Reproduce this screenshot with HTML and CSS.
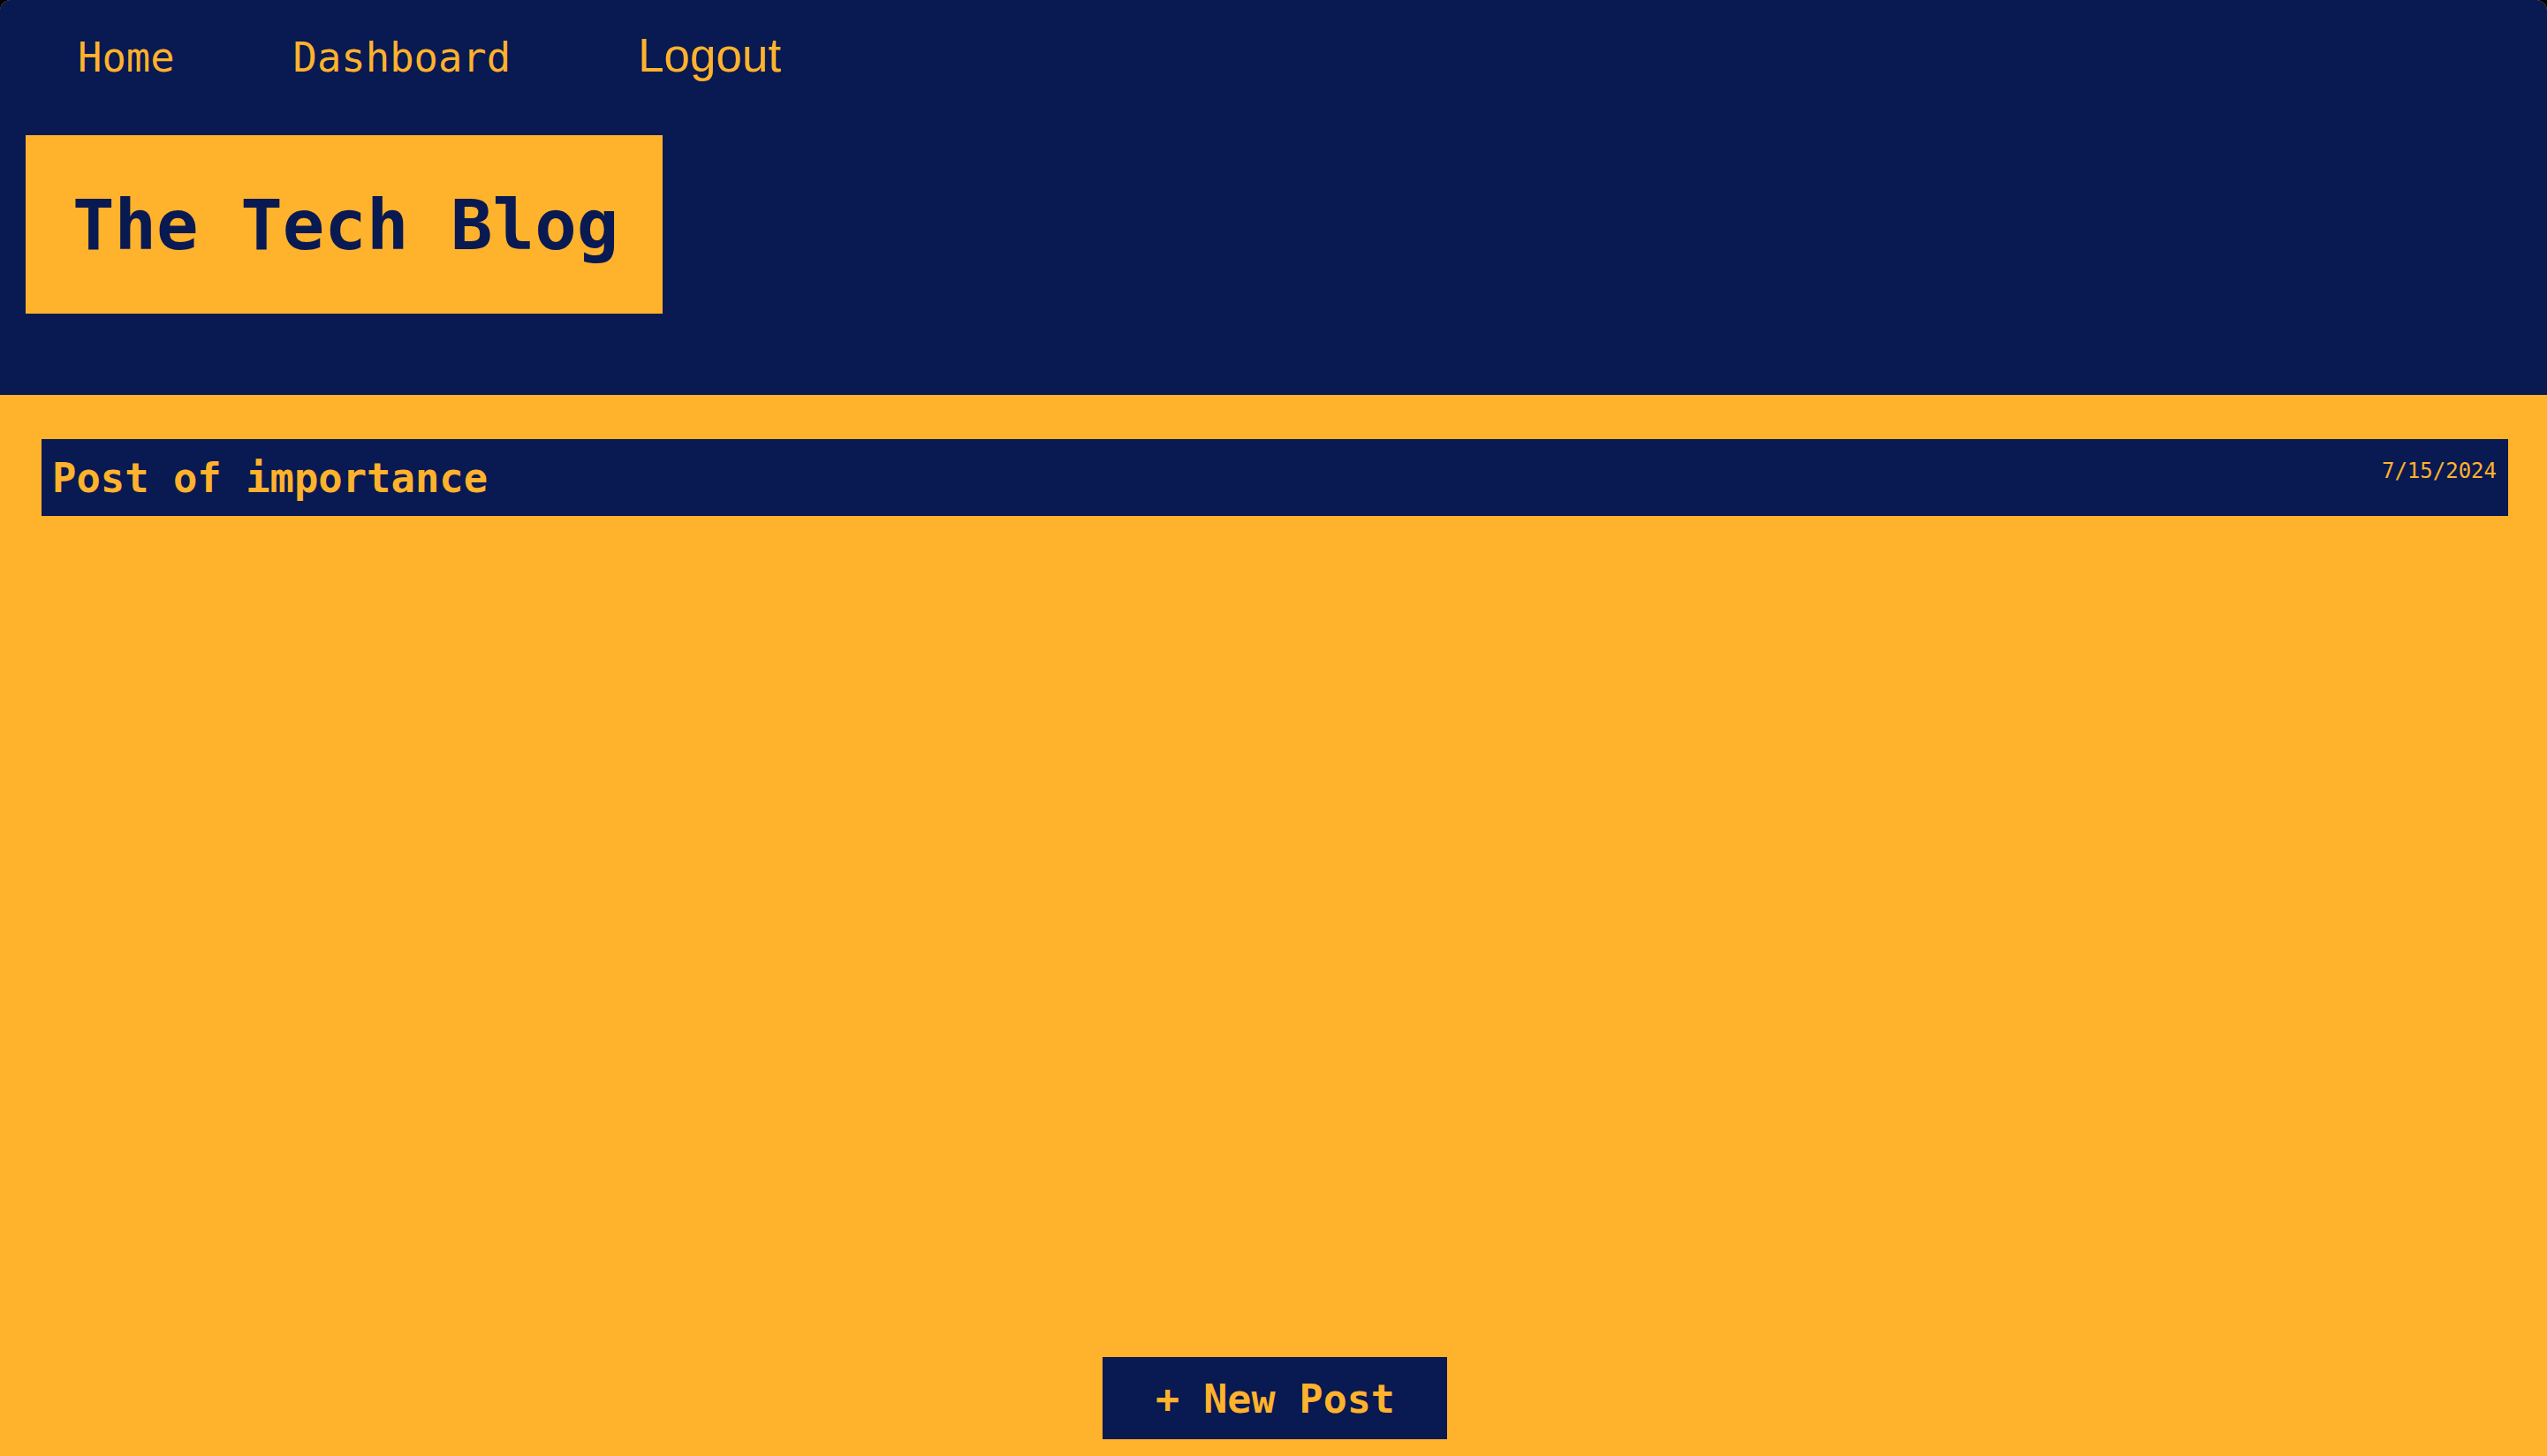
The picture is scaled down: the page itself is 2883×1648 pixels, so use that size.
FILE: index.html
```html
<!DOCTYPE html>
<html lang="en">
<head>
<meta charset="utf-8">
<title>The Tech Blog</title>
<link rel="stylesheet" href="styles.css">
</head>
<body>
<div class="page">
  <header class="site-header">
    <nav class="nav">
      <a class="nav-link" href="#">Home</a>
      <a class="nav-link" href="#">Dashboard</a>
      <a class="nav-link logout" href="#">Logout</a>
    </nav>
    <h1 class="site-title">The Tech Blog</h1>
  </header>
  <main class="dashboard">
    <article class="post-bar">
      <h2 class="post-title">Post of importance</h2>
      <span class="post-date">7/15/2024</span>
    </article>
    <button class="new-post" type="button">+ New Post</button>
  </main>
</div>
</body>
</html>
```

FILE: styles.css
```css
html {
  background: #000;
  margin: 0;
  padding: 0;
}

body {
  margin: 0;
  padding: 0;
  font-family: "DejaVu Sans Mono", monospace;
}

.page {
  height: 100vh;
  display: flex;
  flex-direction: column;
  background: #FFB22C;
  border-radius: 12px 12px 0 0;
  overflow: hidden;
}

.site-header {
  background: #091952;
  padding: 0 0 92px 29px;
  height: 447px;
  flex: none;
  box-sizing: border-box;
}

.nav {
  display: flex;
  align-items: baseline;
  padding-top: 36px;
  margin-left: 59px;
  height: 89px;
  box-sizing: border-box;
}

.nav-link {
  color: #FFB22C;
  text-decoration: none;
  font-family: "DejaVu Sans Mono", monospace;
  font-size: 45.5px;
  line-height: 45px;
  margin-right: 134px;
}

.nav-link.logout {
  font-family: "Liberation Sans", Arial, sans-serif;
  font-size: 53px;
  line-height: 53px;
  margin-left: 10px;
  margin-right: 0;
}

.site-title {
  display: inline-block;
  margin: 64px 0 0 0;
  background: #FFB22C;
  color: #091952;
  font-family: "DejaVu Sans Mono", monospace;
  font-weight: bold;
  font-size: 79px;
  line-height: normal;
  padding: 56px 40px 0 53px;
  width: 721px;
  height: 202px;
  box-sizing: border-box;
  white-space: nowrap;
}

.dashboard {
  flex: 1;
  display: flex;
  flex-direction: column;
  align-items: stretch;
  padding: 50px 44px 19px 47px;
  box-sizing: border-box;
}

.post-bar {
  display: flex;
  justify-content: space-between;
  align-items: flex-start;
  background: #091952;
  height: 87px;
  box-sizing: border-box;
  padding: 18px 13px 0 12px;
}

.post-title {
  margin: 0;
  color: #FFB22C;
  font-family: "DejaVu Sans Mono", monospace;
  font-weight: bold;
  font-size: 45.5px;
  line-height: normal;
}

.post-date {
  color: #FFB22C;
  font-family: "DejaVu Sans Mono", monospace;
  font-size: 24px;
  line-height: normal;
  margin-top: 4px;
}

.new-post {
  margin-top: auto;
  align-self: center;
  background: #091952;
  color: #FFB22C;
  border: none;
  border-radius: 0;
  font-family: "DejaVu Sans Mono", monospace;
  font-weight: bold;
  font-size: 45px;
  line-height: normal;
  padding: 21px 59px 19px 60px;
  width: 390px;
  height: 93px;
  box-sizing: border-box;
  white-space: nowrap;
  cursor: pointer;
}
```
